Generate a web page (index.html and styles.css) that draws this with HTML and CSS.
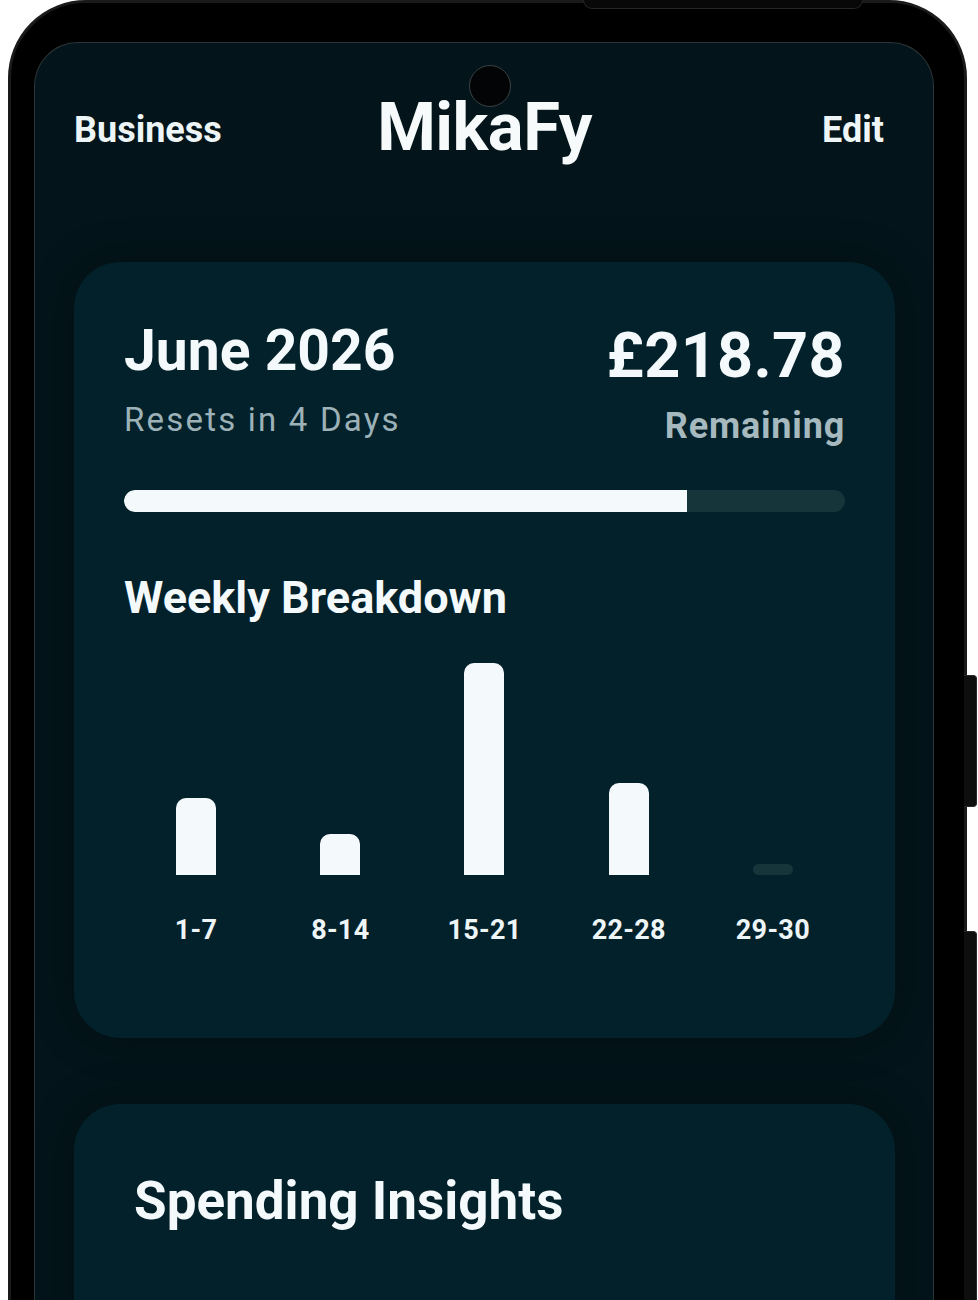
FILE: index.html
```html
<!DOCTYPE html>
<html lang="en">
<head>
<meta charset="utf-8">
<title>MikaFy</title>
<link rel="stylesheet" href="styles.css">
</head>
<body>
<div class="phone">
  <div class="top-button"></div>
  <div class="side-button side-button--volume"></div>
  <div class="side-button side-button--power"></div>
  <div class="screen">
    <div class="camera"></div>
    <header class="app-header">
      <span class="header-link header-link--left">Business</span>
      <span class="app-title">MikaFy</span>
      <span class="header-link header-link--right">Edit</span>
    </header>

    <section class="card budget-card">
      <div class="budget-top">
        <div class="budget-period">
          <div class="period-title">June 2026</div>
          <div class="period-sub">Resets in 4 Days</div>
        </div>
        <div class="budget-amount">
          <div class="amount-value">£218.78</div>
          <div class="amount-label">Remaining</div>
        </div>
      </div>
      <div class="progress">
        <div class="progress-fill" style="width: 78.1%"></div>
      </div>

      <h2 class="section-title">Weekly Breakdown</h2>
      <div class="chart">
        <div class="chart-col">
          <div class="bar-area"><div class="bar" style="height: 77px"></div></div>
          <div class="bar-label">1-7</div>
        </div>
        <div class="chart-col">
          <div class="bar-area"><div class="bar" style="height: 41px"></div></div>
          <div class="bar-label">8-14</div>
        </div>
        <div class="chart-col">
          <div class="bar-area"><div class="bar" style="height: 212px"></div></div>
          <div class="bar-label">15-21</div>
        </div>
        <div class="chart-col">
          <div class="bar-area"><div class="bar" style="height: 92px"></div></div>
          <div class="bar-label">22-28</div>
        </div>
        <div class="chart-col">
          <div class="bar-area"><div class="bar bar--empty"></div></div>
          <div class="bar-label">29-30</div>
        </div>
      </div>
    </section>

    <section class="card insights-card">
      <h2 class="insights-title">Spending Insights</h2>
    </section>
  </div>
</div>
</body>
</html>
```

FILE: styles.css
```css
html, body {
  margin: 0;
  padding: 0;
  background: #ffffff;
  overflow: hidden;
}

body {
  font-family: Roboto, "Liberation Sans", Arial, sans-serif;
  color: #f4f9fb;
  padding-left: 8px;
}

.phone {
  position: relative;
  width: 959px;
  height: 1400px;
  background: #000000;
  border: 3px solid #1a1a1a;
  border-radius: 78px 78px 0 0;
  padding: 39px 30px 0 23px;
  box-sizing: border-box;
}

.top-button {
  position: absolute;
  top: -3px;
  left: 572px;
  width: 278px;
  height: 8px;
  background: #080808;
  border: 1px solid #262626;
  border-top: none;
  border-radius: 0 0 14px 14px;
}

.side-button {
  position: absolute;
  right: -13px;
  width: 12px;
  background: #0e0e0e;
  border: 1px solid #2a2a2a;
  border-left: none;
  border-radius: 0 4px 4px 0;
}

.side-button--volume {
  top: 672px;
  height: 130px;
}

.side-button--power {
  top: 928px;
  height: 420px;
}

.screen {
  position: relative;
  width: 900px;
  height: 1400px;
  background: #03151a;
  border: 1px solid #2b3538;
  border-bottom: none;
  border-radius: 44px 44px 0 0;
  box-sizing: border-box;
  padding: 51px 38px 0 39px;
}

.camera {
  position: absolute;
  top: 22px;
  left: 434px;
  width: 40px;
  height: 40px;
  border-radius: 50%;
  background: #020405;
  border: 1px solid #3a4245;
}

.app-header {
  display: grid;
  grid-template-columns: 1fr auto 1fr;
  align-items: start;
  height: 168px;
}

.header-link {
  font-size: 36px;
  font-weight: 700;
  line-height: 1;
  margin-top: 18px;
  color: #eef5f7;
}

.header-link--left {
  justify-self: start;
}

.header-link--right {
  justify-self: end;
  margin-right: 11px;
}

.app-title {
  font-size: 67px;
  font-weight: 700;
  line-height: 1;
  color: #f6fafb;
  letter-spacing: -0.5px;
}

.card {
  background: #03212a;
  border-radius: 46px;
  box-shadow: 0 0 40px rgba(0, 0, 0, 0.35);
  box-sizing: border-box;
}

.budget-card {
  padding: 60px 50px 92px 50px;
  height: 776px;
}

.budget-top {
  display: flex;
  justify-content: space-between;
  align-items: flex-start;
}

.period-title {
  font-size: 57px;
  font-weight: 700;
  line-height: 1;
}

.period-sub {
  margin-top: 24px;
  font-size: 33px;
  font-weight: 400;
  line-height: 1;
  color: #9db2b8;
  letter-spacing: 2.2px;
}

.budget-amount {
  text-align: right;
}

.amount-value {
  font-size: 63px;
  font-weight: 700;
  line-height: 1;
  letter-spacing: 0.3px;
  padding-top: 2px;
}

.amount-label {
  margin-top: 21px;
  font-size: 36px;
  font-weight: 700;
  line-height: 1;
  color: #a5b9be;
  letter-spacing: 0.8px;
}

.progress {
  margin-top: 46px;
  height: 22px;
  border-radius: 11px;
  background: #15353b;
  overflow: hidden;
}

.progress-fill {
  height: 100%;
  background: #f4f9fb;
  border-radius: 11px 0 0 11px;
}

.section-title {
  margin: 63px 0 0 0;
  font-size: 45px;
  font-weight: 700;
  line-height: 1;
  letter-spacing: 0;
}

.chart {
  display: grid;
  grid-template-columns: repeat(5, 1fr);
  margin-top: 43px;
}

.chart-col {
  display: flex;
  flex-direction: column;
  align-items: center;
}

.bar-area {
  height: 212px;
  display: flex;
  align-items: flex-end;
  justify-content: center;
}

.bar {
  width: 40px;
  background: #f4f9fb;
  border-radius: 10px 10px 0 0;
}

.bar--empty {
  height: 11px;
  background: #15353b;
  border-radius: 6px;
}

.bar-label {
  margin-top: 42px;
  font-size: 27px;
  font-weight: 700;
  line-height: 1;
  letter-spacing: 0.3px;
  color: #eef5f7;
}

.insights-card {
  margin-top: 66px;
  height: 400px;
  padding: 71px 60px 0 60px;
}

.insights-title {
  margin: 0;
  font-size: 53px;
  font-weight: 700;
  line-height: 1;
}
```
